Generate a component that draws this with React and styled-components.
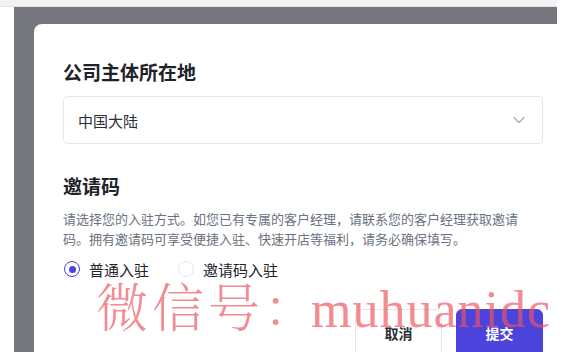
import React, { useState } from 'react';
import styled, { createGlobalStyle } from 'styled-components';
import { ChevronDown } from 'lucide-react';

const GlobalStyle = createGlobalStyle`
  html, body {
    margin: 0;
    padding: 0;
    background: #ffffff;
    overflow: hidden;
  }
  body {
    font-family: 'Noto Sans CJK SC', 'Noto Sans', sans-serif;
    -webkit-font-smoothing: antialiased;
  }
`;

const Page = styled.div`
  position: relative;
  width: 570px;
  height: 352px;
  overflow: hidden;
  background: #ffffff;
`;

const TopStrip = styled.div`
  width: 557px;
  height: 7px;
  background: #f2f2f3;
  border-bottom: 1px solid #e4e4e6;
  box-sizing: border-box;
`;

const Backdrop = styled.div`
  margin-left: 14px;
  width: 543px;
  height: 345px;
  box-sizing: border-box;
  padding: 17px 0 0 20px;
  background: #75777d;
`;

const Card = styled.div`
  width: 538px;
  min-height: 340px;
  box-sizing: border-box;
  padding: 35px 29px 0;
  background: #ffffff;
  border-radius: 8px 0 0 0;
  display: flex;
  flex-direction: column;
`;

const Heading = styled.h2`
  margin: ${(p) => p.$top || 0}px 0 0;
  font-size: 19px;
  line-height: 26px;
  font-weight: 600;
  color: #1f2329;
`;

const Select = styled.div`
  margin-top: 11px;
  height: 48px;
  box-sizing: border-box;
  border: 1px solid #e5e7eb;
  border-radius: 4px;
  padding: 0 13px 0 14px;
  display: flex;
  align-items: center;
  justify-content: space-between;
  font-size: 15px;
  color: #2b2f36;
`;

const Hint = styled.p`
  margin: 10px 0 0;
  font-size: 13px;
  line-height: 20px;
  color: #6b7280;
`;

const RadioRow = styled.div`
  margin-top: 10px;
  display: flex;
  align-items: center;
  gap: 28px;
  height: 20px;
`;

const RadioLabel = styled.label`
  display: flex;
  align-items: center;
  gap: 9px;
  font-size: 15px;
  color: #1f2329;
  cursor: pointer;
  margin-left: 1px;
`;

const RadioDot = styled.span`
  width: 16px;
  height: 16px;
  box-sizing: border-box;
  border-radius: 50%;
  border: ${(p) => (p.$on ? '1.5px solid #4b43dc' : '1px solid #e3e5ea')};
  display: flex;
  align-items: center;
  justify-content: center;

  &::after {
    content: '';
    width: 7px;
    height: 7px;
    border-radius: 50%;
    background: ${(p) => (p.$on ? '#4b43dc' : 'transparent')};
  }
`;

const Actions = styled.div`
  margin-top: 30px;
  display: flex;
  justify-content: flex-end;
  gap: 14px;
`;

const Button = styled.button`
  width: 87px;
  height: 48px;
  border-radius: 6px;
  font-family: inherit;
  font-size: 14px;
  font-weight: 600;
  cursor: pointer;
  border: 1px solid ${(p) => (p.$primary ? '#4b43dc' : '#e5e7eb')};
  background: ${(p) => (p.$primary ? '#4b43dc' : '#ffffff')};
  color: ${(p) => (p.$primary ? '#ffffff' : '#2b2f36')};
`;

const Watermark = styled.div`
  position: absolute;
  left: 96px;
  top: 284px;
  font-family: 'Liberation Serif', 'Noto Serif CJK SC', 'Noto Sans CJK SC', serif;
  font-size: 52px;
  line-height: 52px;
  font-weight: 300;
  letter-spacing: 1px;
  color: rgba(236, 84, 94, 0.68);
  white-space: nowrap;
  pointer-events: none;
`;

const WideChars = styled.span`
  letter-spacing: 4px;
`;

const Colon = styled.span`
  margin-right: -6px;
`;

const options = ['普通入驻', '邀请码入驻'];

export default function App() {
  const [mode, setMode] = useState(0);

  return (
    <Page>
      <GlobalStyle />
      <TopStrip />
      <Backdrop>
        <Card>
          <Heading>公司主体所在地</Heading>
          <Select>
            <span>中国大陆</span>
            <ChevronDown size={20} strokeWidth={1.4} color="#a3a8b0" />
          </Select>
          <Heading $top={29}>邀请码</Heading>
          <Hint>
            请选择您的入驻方式。如您已有专属的客户经理，请联系您的客户经理获取邀请码。拥有邀请码可享受便捷入驻、快速开店等福利，请务必确保填写。
          </Hint>
          <RadioRow>
            {options.map((o, i) => (
              <RadioLabel key={o} onClick={() => setMode(i)}>
                <RadioDot $on={mode === i} />
                {o}
              </RadioLabel>
            ))}
          </RadioRow>
          <Actions>
            <Button>取消</Button>
            <Button $primary>提交</Button>
          </Actions>
        </Card>
      </Backdrop>
      <Watermark>
        <WideChars>微信号</WideChars>
        <Colon>：</Colon>muhuanidc
      </Watermark>
    </Page>
  );
}
